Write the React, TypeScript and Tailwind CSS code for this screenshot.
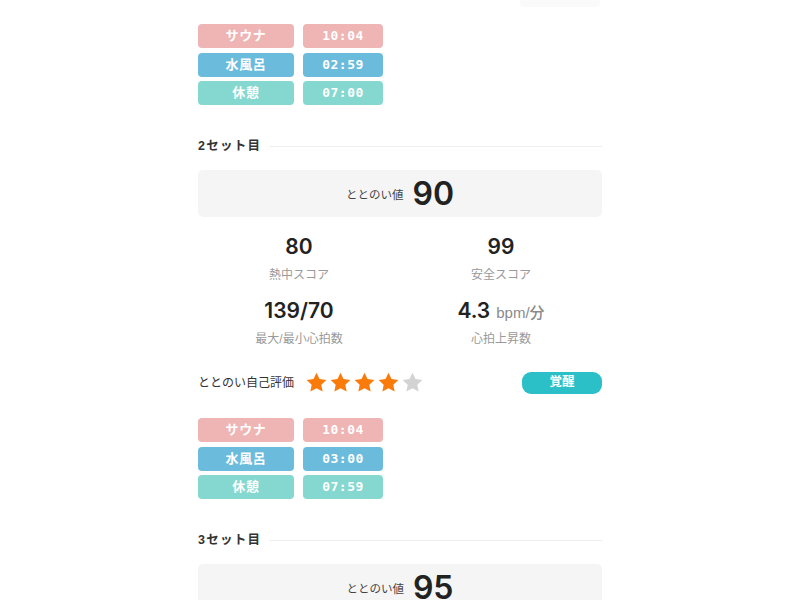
import React from "react";

const jp = "font-['Liberation_Sans','Noto_Sans_CJK_JP',sans-serif]";
const num = "font-['Inter','Liberation_Sans',sans-serif]";
const mono = "font-['DejaVu_Sans_Mono','Liberation_Mono',monospace]";

type Step = { label: string; time: string; kind: "sauna" | "water" | "rest" };

const pillColor = {
  sauna: "bg-[#efb4b4]",
  water: "bg-[#6bbcdc]",
  rest: "bg-[#85d8cf]",
};

function Timeline({ steps }: { steps: Step[] }) {
  return (
    <div className="flex flex-col gap-[4.5px]">
      {steps.map((s) => (
        <div key={s.kind} className="flex gap-[9px]">
          <div
            className={`flex h-[24px] w-[96px] items-center justify-center rounded-[4px] text-[13px] font-bold tracking-[0.05em] text-white ${pillColor[s.kind]} ${jp}`}
          >
            {s.label}
          </div>
          <div
            className={`flex h-[24px] w-[80px] items-center justify-center rounded-[4px] text-[13px] font-bold tracking-[0.04em] text-white ${pillColor[s.kind]} ${mono}`}
          >
            {s.time}
          </div>
        </div>
      ))}
    </div>
  );
}

function Star({ on }: { on: boolean }) {
  return (
    <svg viewBox="0 0 24 24" className="h-[23px] w-[23px]">
      <path
        d="M12 1.8l3.1 6.6 7.2.9-5.3 5 1.4 7.1L12 17.9l-6.4 3.5 1.4-7.1-5.3-5 7.2-.9z"
        fill={on ? "#fa7a0a" : "#d3d3d3"}
      />
    </svg>
  );
}

function Stat({ value, unit, label }: { value: string; unit?: string; label: string }) {
  return (
    <div className="flex flex-col items-center">
      <div className="flex h-[28px] items-baseline gap-[6px]">
        <span className={`text-[21px] font-semibold text-[#222] ${num}`}>{value}</span>
        {unit && <span className="text-[15px] font-medium text-[#8a8a8a]">{unit}</span>}
      </div>
      <div className="mt-[7px] text-[12px] text-[#9a9a9a]">{label}</div>
    </div>
  );
}

function SetBlock({
  n,
  score,
  stats,
  rating,
  mood,
  steps,
}: {
  n: number;
  score: number;
  stats?: { heat: string; safe: string; hr: string; rise: string };
  rating?: number;
  mood?: string;
  steps?: Step[];
}) {
  return (
    <section className="flex flex-col">
      <div className="flex h-[16px] items-center gap-[8px]">
        <span className="text-[12.5px] font-bold tracking-[0.1em] text-[#333]">{n}セット目</span>
        <div className="h-px flex-1 bg-[#eeeeee]" />
      </div>
      <div className="mt-[16px] flex h-[47px] items-center justify-center gap-[9px] rounded-[5px] bg-[#f5f5f5]">
        <span className="mt-[4px] text-[11.5px] text-[#444]">ととのい値</span>
        <span className={`text-[32px] font-semibold leading-none text-[#222] ${num}`}>{score}</span>
      </div>
      {stats && (
        <>
          <div className="mt-[14px] grid grid-cols-2 gap-y-[11px]">
            <Stat value={stats.heat} label="熱中スコア" />
            <Stat value={stats.safe} label="安全スコア" />
            <Stat value={stats.hr} label="最大/最小心拍数" />
            <Stat value={stats.rise} unit="bpm/分" label="心拍上昇数" />
          </div>
          <div className="mt-[23px] flex h-[23px] items-center">
            <span className="w-[107px] text-[12px] text-[#333]">ととのい自己評価</span>
            <div className="flex gap-[1px]">
              {[0, 1, 2, 3, 4].map((i) => (
                <Star key={i} on={i < (rating ?? 0)} />
              ))}
            </div>
            <div className="ml-auto flex h-[22px] w-[80px] items-center justify-center rounded-[9px] bg-[#2bc0c7] text-[12.5px] font-bold text-white">
              {mood}
            </div>
          </div>
        </>
      )}
      {steps && (
        <div className="mt-[24px]">
          <Timeline steps={steps} />
        </div>
      )}
    </section>
  );
}

export default function App() {
  const set1: Step[] = [
    { label: "サウナ", time: "10:04", kind: "sauna" },
    { label: "水風呂", time: "02:59", kind: "water" },
    { label: "休憩", time: "07:00", kind: "rest" },
  ];
  const set2: Step[] = [
    { label: "サウナ", time: "10:04", kind: "sauna" },
    { label: "水風呂", time: "03:00", kind: "water" },
    { label: "休憩", time: "07:59", kind: "rest" },
  ];

  return (
    <main className={`h-[600px] w-full overflow-hidden bg-white ${jp}`}>
      <div className="mx-auto flex w-[404px] flex-col">
        <div className="ml-auto mr-[2px] h-[7px] w-[80px] rounded-b-[4px] bg-[#fafafa]" />
        <div className="mt-[17px]">
          <Timeline steps={set1} />
        </div>
        <div className="mt-[33px] flex flex-col gap-[33px]">
          <SetBlock
            n={2}
            score={90}
            stats={{ heat: "80", safe: "99", hr: "139/70", rise: "4.3" }}
            rating={4}
            mood="覚醒"
            steps={set2}
          />
          <SetBlock n={3} score={95} />
        </div>
      </div>
    </main>
  );
}
